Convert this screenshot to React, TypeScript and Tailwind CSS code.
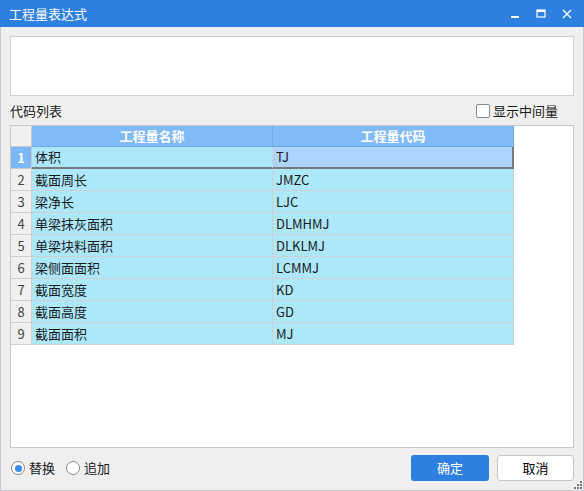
import React from 'react';

const rows = [
  { name: '体积', code: 'TJ' },
  { name: '截面周长', code: 'JMZC' },
  { name: '梁净长', code: 'LJC' },
  { name: '单梁抹灰面积', code: 'DLMHMJ' },
  { name: '单梁块料面积', code: 'DLKLMJ' },
  { name: '梁侧面面积', code: 'LCMMJ' },
  { name: '截面宽度', code: 'KD' },
  { name: '截面高度', code: 'GD' },
  { name: '截面面积', code: 'MJ' },
];

const font = { fontFamily: '"Noto Sans CJK SC", "Noto Sans", sans-serif' };

export default function App() {
  return (
    <div
      className="w-[584px] h-[491px] flex flex-col bg-[#efefef] border-x border-b border-[#c3cad6] text-[13px] text-[#1a1a1a] select-none"
      style={font}
    >
      {/* Title bar */}
      <div className="h-[27px] -mx-px bg-[#2d80df] flex items-center justify-between pl-[9px] pr-[12px] text-white">
        <span className="text-[13px] leading-none">工程量表达式</span>
        <div className="flex items-center gap-[16px]">
          <svg width="10" height="10" viewBox="0 0 10 10">
            <rect x="1" y="7" width="8" height="2" fill="white" />
          </svg>
          <svg width="10" height="10" viewBox="0 0 10 10">
            <rect x="1" y="1" width="8" height="7" fill="none" stroke="white" strokeWidth="1.2" />
            <rect x="1" y="1" width="8" height="2" fill="white" />
          </svg>
          <svg width="10" height="10" viewBox="0 0 10 10">
            <path d="M1 1 L9 9 M9 1 L1 9" stroke="white" strokeWidth="1.4" />
          </svg>
        </div>
      </div>

      <div className="flex-1 flex flex-col px-[9px]">
        {/* Expression box */}
        <div className="mt-[9px] h-[60px] bg-white border border-[#cfd0d6]" />

        {/* Label row */}
        <div className="h-[29px] flex items-center justify-between">
          <span>代码列表</span>
          <label className="flex items-center gap-[3px] mr-[16px]">
            <span className="shrink-0 w-[14px] h-[14px] rounded-[2px] border border-[#8a8a8a] bg-white" />
            <span>显示中间量</span>
          </label>
        </div>

        {/* Grid */}
        <div className="h-[323px] bg-white border border-[#c8c8c8]">
          <div className="grid grid-cols-[21px_241px_241px]">
            <div className="h-[21px] bg-[#f0f0f0] border-r border-b border-[#c8c8c8]" />
            <div className="h-[21px] bg-[#80baf7] border-r border-b border-[#6ea9ee] flex items-center justify-center text-white font-bold">
              工程量名称
            </div>
            <div className="h-[21px] bg-[#80baf7] border-r border-b border-[#6ea9ee] flex items-center justify-center text-white font-bold">
              工程量代码
            </div>

            {rows.map((r, i) =>
              i === 0 ? (
                <React.Fragment key={i}>
                  <div className="h-[22px] bg-[#7cb8f5] border-r border-b border-[#c8c8c8] flex items-center justify-center text-white font-bold">
                    1
                  </div>
                  <div className="h-[22px] bg-[#ade8fa] border-r border-[#d0d0d0] border-b-2 border-b-[#7a7a7a] flex items-center pl-[3px]">
                    {r.name}
                  </div>
                  <div className="h-[22px] bg-[#acd4fc] border-r-2 border-r-[#7a7a7a] border-b-2 border-b-[#7a7a7a] flex items-center pl-[3px]">
                    {r.code}
                  </div>
                </React.Fragment>
              ) : (
                <React.Fragment key={i}>
                  <div className="h-[22px] bg-[#f0f0f0] border-r border-b border-[#d0d0d0] flex items-center justify-center text-[#444]">
                    {i + 1}
                  </div>
                  <div className="h-[22px] bg-[#ade8fa] border-r border-b border-[#d0d0d0] flex items-center pl-[3px]">
                    {r.name}
                  </div>
                  <div className="h-[22px] bg-[#ade8fa] border-r border-b border-[#d0d0d0] flex items-center pl-[3px]">
                    {r.code}
                  </div>
                </React.Fragment>
              )
            )}
          </div>
        </div>

        {/* Footer */}
        <div className="flex-1 flex items-center justify-between pb-[2px]">
          <div className="flex items-center">
            <span className="shrink-0 w-[14px] h-[14px] ml-[1px] rounded-full border border-[#8a8a8a] bg-white flex items-center justify-center">
              <span className="w-[7px] h-[7px] rounded-full bg-[#3b8def]" />
            </span>
            <span className="ml-[4px]">替换</span>
            <span className="shrink-0 w-[14px] h-[14px] ml-[11px] rounded-full border border-[#8a8a8a] bg-white" />
            <span className="ml-[4px]">追加</span>
          </div>
          <div className="flex items-center gap-[8px]">
            <button className="w-[78px] h-[26px] rounded-[3px] bg-[#2d80df] text-white">确定</button>
            <button className="w-[77px] h-[26px] rounded-[3px] bg-white border border-[#c8c8c8] text-black">取消</button>
          </div>
        </div>
      </div>

      {/* Resize grip */}
      <div className="relative h-0">
        <svg className="absolute right-[1px] bottom-[1px]" width="8" height="8" viewBox="0 0 8 8">
          <rect x="6" y="0" width="2" height="2" fill="#777" />
          <rect x="3" y="3" width="2" height="2" fill="#777" />
          <rect x="6" y="3" width="2" height="2" fill="#777" />
          <rect x="0" y="6" width="2" height="2" fill="#777" />
          <rect x="3" y="6" width="2" height="2" fill="#777" />
          <rect x="6" y="6" width="2" height="2" fill="#777" />
        </svg>
      </div>
    </div>
  );
}
